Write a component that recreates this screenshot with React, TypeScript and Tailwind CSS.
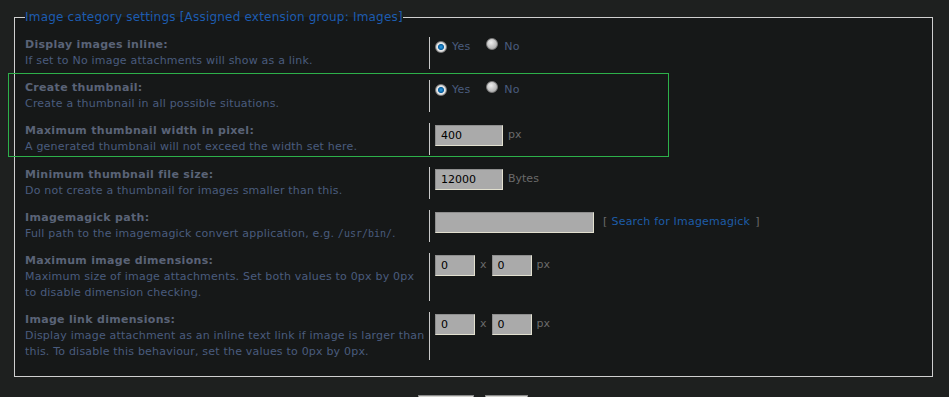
import React from 'react';

const font = { fontFamily: '"DejaVu Sans", Verdana, sans-serif' };

const Radio = ({ checked }: { checked: boolean }) => (
  <span
    className={`inline-block w-[12px] h-[12px] rounded-full border border-[#7a7a7a] ${
      checked
        ? 'bg-[radial-gradient(circle,#2a9ae0_0%,#0b5e9c_38%,#e8e8e8_48%,#bdbdbd_100%)]'
        : 'bg-[radial-gradient(circle_at_40%_35%,#eeeeee_0%,#c4c4c4_50%,#9a9a9a_100%)]'
    }`}
  />
);

const TextInput = ({ value, w }: { value: string; w: string }) => (
  <div
    className={`${w} h-[21px] bg-[#aaaaaa] border border-t-[#8e8e8e] border-l-[#8e8e8e] border-b-[#e2e0cf] border-r-[#e2e0cf] text-black text-[11px] leading-[19px] pl-[5px]`}
  >
    {value}
  </div>
);

const Row = ({
  title,
  desc,
  children,
}: {
  title: string;
  desc: React.ReactNode;
  children: React.ReactNode;
}) => (
  <div className="flex">
    <div className="w-[404px] text-[11px] leading-[16px] tracking-[0.2px] pr-[2px]">
      <div className="font-bold text-[#5a6377] tracking-[0.3px]">{title}</div>
      <div className="text-[#4a5c7e]">{desc}</div>
    </div>
    <div className="border-l border-[#c8c8c8] pl-[5px] pt-[2px] flex-1">{children}</div>
  </div>
);

const YesNo = () => (
  <div className="flex items-center h-[12px] mt-[2px] text-[11px] tracking-[0.2px] text-[#4a5c7e]">
    <Radio checked />
    <span className="ml-[5px]">Yes</span>
    <span className="ml-[16px]">
      <Radio checked={false} />
    </span>
    <span className="ml-[6px]">No</span>
  </div>
);

export default function App() {
  return (
    <div className="w-[949px] h-[397px] bg-[#1e201f] overflow-hidden relative" style={font}>
      <fieldset className="ml-[14px] mt-[10px] w-[919px] h-[367px] border border-[#cfcfcf] bg-[#161818] pl-[10px] pt-[12px]">
        <legend className="text-[12px] leading-[15px] tracking-[0.2px] text-[#1d5cb0]">
          Image category settings [Assigned extension group: Images]
        </legend>
        <div className="flex flex-col gap-[11px]">
          <Row title="Display images inline:" desc="If set to No image attachments will show as a link.">
            <YesNo />
          </Row>
          {/* highlighted block */}
          <div className="-mt-[7px] pt-[6px] -mb-[1px] pb-[1px] -ml-[17px] w-[661px] border border-[#2db04a] pl-[16px] flex flex-col gap-[11px]">
            <Row title="Create thumbnail:" desc="Create a thumbnail in all possible situations.">
              <YesNo />
            </Row>
            <Row
              title="Maximum thumbnail width in pixel:"
              desc="A generated thumbnail will not exceed the width set here."
            >
              <div className="flex items-center gap-[5px] text-[11px] text-[#6a6a6a]">
                <TextInput value="400" w="w-[68px]" />
                <span>px</span>
              </div>
            </Row>
          </div>
          <Row
            title="Minimum thumbnail file size:"
            desc="Do not create a thumbnail for images smaller than this."
          >
            <div className="flex items-center gap-[5px] text-[11px] text-[#6a6a6a]">
              <TextInput value="12000" w="w-[68px]" />
              <span>Bytes</span>
            </div>
          </Row>
          <Row
            title="Imagemagick path:"
            desc={
              <>
                Full path to the imagemagick convert application, e.g.{' '}
                <span className="text-[10px] tracking-normal" style={{ fontFamily: '"DejaVu Sans Mono", monospace' }}>
                  /usr/bin/
                </span>
                .
              </>
            }
          >
            <div className="flex items-center text-[11px] tracking-[0.2px]">
              <TextInput value="" w="w-[159px]" />
              <span className="ml-[9px] text-[#6a6a6a]">[</span>
              <span className="ml-[4px] text-[#1d5ca8]">Search for Imagemagick</span>
              <span className="ml-[5px] text-[#6a6a6a]">]</span>
            </div>
          </Row>
          <Row
            title="Maximum image dimensions:"
            desc="Maximum size of image attachments. Set both values to 0px by 0px to disable dimension checking."
          >
            <div className="flex items-center text-[11px] text-[#6a6a6a]">
              <TextInput value="0" w="w-[40px]" />
              <span className="mx-[5px]">x</span>
              <TextInput value="0" w="w-[40px]" />
              <span className="ml-[5px]">px</span>
            </div>
          </Row>
          <Row
            title="Image link dimensions:"
            desc="Display image attachment as an inline text link if image is larger than this. To disable this behaviour, set the values to 0px by 0px."
          >
            <div className="flex items-center text-[11px] text-[#6a6a6a]">
              <TextInput value="0" w="w-[40px]" />
              <span className="mx-[5px]">x</span>
              <TextInput value="0" w="w-[40px]" />
              <span className="ml-[5px]">px</span>
            </div>
          </Row>
        </div>
      </fieldset>
      <div className="flex gap-[11px] ml-[418px] mt-[18px]">
        <div className="w-[56px] h-[20px] bg-[#d4d4d0] border border-[#8a8a8a]" />
        <div className="w-[43px] h-[20px] bg-[#d4d4d0] border border-[#8a8a8a]" />
      </div>
    </div>
  );
}
